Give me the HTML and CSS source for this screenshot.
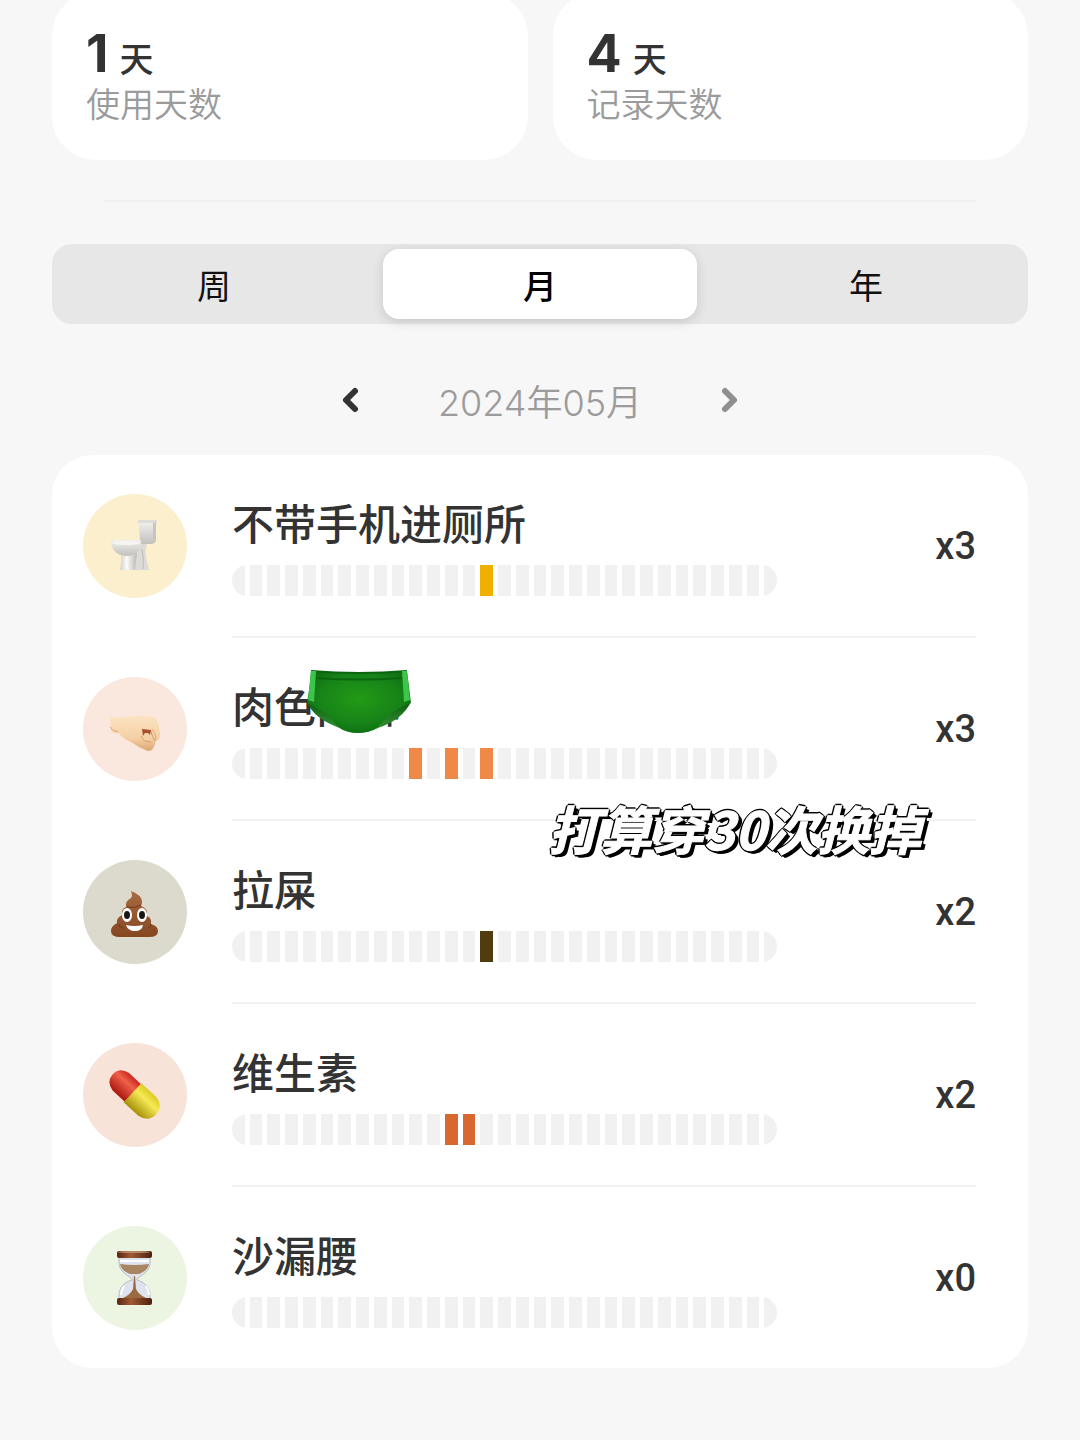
FILE: index.html
```html
<!DOCTYPE html>
<html lang="zh-CN">
<head>
<meta charset="utf-8">
<meta name="viewport" content="width=device-width, initial-scale=1">
<title>统计</title>
<link rel="stylesheet" href="styles.css">
</head>
<body>
<main class="page">
  <section class="stats">
    <div class="stat"><p class="stat-value"><strong>1</strong> 天</p><p class="stat-label">使用天数</p></div>
    <div class="stat"><p class="stat-value"><strong>4</strong> 天</p><p class="stat-label">记录天数</p></div>
  </section>
  <hr class="rule">
  <div class="segments">
    <button class="segment" type="button">周</button>
    <button class="segment segment-on" type="button" aria-pressed="true">月</button>
    <button class="segment" type="button">年</button>
  </div>
  <nav class="period">
    <button class="arrow" type="button" aria-label="上个月"><svg width="20" height="28" viewBox="0 0 20 28"><path d="M15 5 6 14l9 9"/></svg></button>
    <span class="period-name">2024年05月</span>
    <button class="arrow arrow-next" type="button" aria-label="下个月"><svg width="20" height="28" viewBox="0 0 20 28"><path d="M5 5l9 9-9 9"/></svg></button>
  </nav>
  <ul class="habits">
    <li class="habit">
      <span class="badge badge-yellow">
        <svg width="56" height="56" viewBox="0 0 56 56">
          <defs>
            <linearGradient id="china" x1="0" y1="0" x2="0" y2="1"><stop offset="0" stop-color="#f1f0ee"/><stop offset="1" stop-color="#c2c0bd"/></linearGradient>
            <linearGradient id="foot" x1="0" y1="0" x2="1" y2="0"><stop offset="0" stop-color="#d0cecb"/><stop offset=".4" stop-color="#fbfbfa"/><stop offset="1" stop-color="#bab7b3"/></linearGradient>
          </defs>
          <path d="M29 26h11c-3 9 0 17 2 26H27z" fill="#dddbd8"/>
          <path d="M14 35h16l-2 17H13q2-8 1-17z" fill="url(#foot)"/>
          <path d="M32 4h17v18q-1 4-5 4H33z" fill="url(#china)"/>
          <path d="M31 2h19v3H31z" fill="#dedcd8"/>
          <path d="M46 5h3v18l-3 2z" fill="#c8c5c1"/>
          <path d="M4 25q0-3 4-3h24q3 0 2 4-2 12-15 12Q6 37 4 25z" fill="url(#china)"/>
          <ellipse cx="19" cy="25" rx="14" ry="2" fill="#f6f5f3"/>
          <path d="M35 31q2 9 1 20" fill="none" stroke="#bcb9b5"/>
        </svg>
      </span>
      <div class="habit-body">
        <div class="habit-main"><h2 class="habit-name">不带手机进厕所</h2><div class="days gold"><i></i><i></i><i></i><i></i><i></i><i></i><i></i><i></i><i></i><i></i><i></i><i></i><i></i><i></i><i class="on"></i><i></i><i></i><i></i><i></i><i></i><i></i><i></i><i></i><i></i><i></i><i></i><i></i><i></i><i></i><i></i><i></i></div></div>
        <span class="count">x3</span>
      </div>
    </li>
    <li class="habit">
      <span class="badge badge-peach">
        <svg width="56" height="56" viewBox="0 0 56 56">
          <defs><linearGradient id="skin" x1="0" y1="0" x2="0" y2="1"><stop offset="0" stop-color="#fce3c2"/><stop offset=".65" stop-color="#f5cfa4"/><stop offset="1" stop-color="#dca371"/></linearGradient></defs>
          <path d="M3 16q9 1 17 0 10-2 19-1 9 0 11 4 2 5 3 14 1 5-4 7-2 10-8 10-9-3-17-9Q14 37 12 32q-5 1-8-2z" fill="url(#skin)"/>
          <path d="M35 29l9 1q1 6 4 10M34 35q2 6 10 6" fill="none" stroke="#d29a6b"/>
          <path d="M35 28l9 1-1 5-2-2h-3l-2 3z" fill="#a9512c"/>
          <path d="M45 28q4 4 4 11M3 26q2 4 8 5" fill="none" stroke="#d9a77a"/>
        </svg>
      </span>
      <div class="habit-body">
        <div class="habit-main"><h2 class="habit-name">肉色内裤
          <svg class="briefs" width="106" height="66" viewBox="0 0 106 66" aria-hidden="true">
            <defs>
              <radialGradient id="cloth" cx=".5" cy=".45" r=".6"><stop offset="0" stop-color="#229b16"/><stop offset=".65" stop-color="#168318"/><stop offset="1" stop-color="#0d6c11"/></radialGradient>
              <linearGradient id="lining" x1="0" y1="0" x2="0" y2="1"><stop offset="0" stop-color="#0c5d0f"/><stop offset="1" stop-color="#3b9a38"/></linearGradient>
            </defs>
            <path d="M1 33Q8 50 34 59q19 9 38 0 24-8 33-26z" fill="url(#lining)"/>
            <path d="M5 2q48 4 96 0l4 32Q86 40 71 59q-8 5-19 5-12 0-20-6Q19 41 1 34 4 18 5 2z" fill="url(#cloth)"/>
            <path d="M5 2q48 4 96 0M10 9q43 3 86 0" fill="none" stroke="#0c650e" stroke-width="2"/>
            <path d="M5 2h5L8 33l-6-2zM96 2h5l3 29-6 2z" fill="#3cc44b"/>
          </svg></h2><div class="days orange"><i></i><i></i><i></i><i></i><i></i><i></i><i></i><i></i><i></i><i></i><i class="on"></i><i></i><i class="on"></i><i></i><i class="on"></i><i></i><i></i><i></i><i></i><i></i><i></i><i></i><i></i><i></i><i></i><i></i><i></i><i></i><i></i><i></i><i></i></div></div>
        <span class="count">x3</span>
        <p class="note">打算穿30次换掉</p>
      </div>
    </li>
    <li class="habit">
      <span class="badge badge-olive">
        <svg width="56" height="56" viewBox="0 0 56 56">
          <defs><linearGradient id="brown" x1="0" y1="0" x2="0" y2="1"><stop offset="0" stop-color="#a96b43"/><stop offset="1" stop-color="#85471f"/></linearGradient></defs>
          <path d="M24 7q11 4 11 11 0 2-1 4 7 2 6 10 5 2 4 8 7 2 7 7 0 6-9 6H13q-9 0-9-6 0-5 6-8-1-5 5-8-1-6 4-8-1-6 5-9 2-2 0-7z" fill="url(#brown)"/>
          <path d="M20 23q8 2 14-2M12 40q-1 3 4 4M44 40q0 3-3 4" fill="none" stroke="#6f391a"/>
          <ellipse cx="20" cy="31" rx="5" ry="7" fill="#fff"/><ellipse cx="35" cy="31" rx="5" ry="7" fill="#fff"/>
          <ellipse cx="20" cy="31" rx="3" ry="4" fill="#191716"/><ellipse cx="35" cy="31" rx="3" ry="4" fill="#191716"/>
          <path d="M19 41q8 2 17 0-1 6-8 6t-9-6z" fill="#fff"/>
        </svg>
      </span>
      <div class="habit-body">
        <div class="habit-main"><h2 class="habit-name">拉屎</h2><div class="days umber"><i></i><i></i><i></i><i></i><i></i><i></i><i></i><i></i><i></i><i></i><i></i><i></i><i></i><i></i><i class="on"></i><i></i><i></i><i></i><i></i><i></i><i></i><i></i><i></i><i></i><i></i><i></i><i></i><i></i><i></i><i></i><i></i></div></div>
        <span class="count">x2</span>
      </div>
    </li>
    <li class="habit">
      <span class="badge badge-rose">
        <svg width="56" height="56" viewBox="0 0 56 56">
          <defs>
            <linearGradient id="red" x1="0" y1="0" x2="0" y2="1"><stop offset="0" stop-color="#c9261d"/><stop offset=".35" stop-color="#f0604b"/><stop offset="1" stop-color="#a9160f"/></linearGradient>
            <linearGradient id="yellow" x1="0" y1="0" x2="0" y2="1"><stop offset="0" stop-color="#dccb22"/><stop offset=".35" stop-color="#f6ea55"/><stop offset="1" stop-color="#a68f08"/></linearGradient>
          </defs>
          <g transform="rotate(43 27 27)">
            <path d="M27 15H9Q-2 17-2 27t11 12h18z" fill="url(#red)"/>
            <path d="M25 14h20q12 2 12 13T45 40H25z" fill="url(#yellow)"/>
          </g>
        </svg>
      </span>
      <div class="habit-body">
        <div class="habit-main"><h2 class="habit-name">维生素</h2><div class="days rust"><i></i><i></i><i></i><i></i><i></i><i></i><i></i><i></i><i></i><i></i><i></i><i></i><i class="on"></i><i class="on"></i><i></i><i></i><i></i><i></i><i></i><i></i><i></i><i></i><i></i><i></i><i></i><i></i><i></i><i></i><i></i><i></i><i></i></div></div>
        <span class="count">x2</span>
      </div>
    </li>
    <li class="habit">
      <span class="badge badge-green">
        <svg width="56" height="56" viewBox="0 0 56 56">
          <defs><linearGradient id="wood" x1="0" y1="0" x2="1" y2="0"><stop offset="0" stop-color="#57250f"/><stop offset=".4" stop-color="#a05a34"/><stop offset="1" stop-color="#4c200e"/></linearGradient></defs>
          <path d="M12 7h31v6c0 8-7 11-13 16v1c7 2 13 7 13 15v4H12v-4c0-8 6-13 13-15v-1C19 24 12 21 12 13z" fill="#dfe3ed" stroke="#b9bdc6"/>
          <path d="M13 14q14 2 29 0c-1 6-6 8-10 10h-9c-4-2-9-4-10-10z" fill="#a98663"/>
          <path d="M27 26h1l1 13q3 6 10 9H16q7-3 10-9z" fill="#9a6b40"/>
          <path d="M17 36q-3 4-3 9M39 36q3 4 3 9M13 11h29" fill="none" stroke="#fff" stroke-width="2"/>
          <rect x="10" y="1" width="35" height="7" rx="2" fill="url(#wood)"/><ellipse cx="27" cy="2" rx="16" ry="1" fill="#b58a6a"/>
          <rect x="10" y="48" width="35" height="7" rx="2" fill="url(#wood)"/>
        </svg>
      </span>
      <div class="habit-body">
        <div class="habit-main"><h2 class="habit-name">沙漏腰</h2><div class="days"><i></i><i></i><i></i><i></i><i></i><i></i><i></i><i></i><i></i><i></i><i></i><i></i><i></i><i></i><i></i><i></i><i></i><i></i><i></i><i></i><i></i><i></i><i></i><i></i><i></i><i></i><i></i><i></i><i></i><i></i><i></i></div></div>
        <span class="count">x0</span>
      </div>
    </li>
  </ul>
</main>
</body>
</html>
```
FILE: styles.css
```css
* { box-sizing: border-box; }

body {
  margin: 0;
  background: #f7f7f7;
  color: #333;
  font-family: Inter, "Noto Sans CJK SC", sans-serif;
}

p, h2, ul { margin: 0; padding: 0; }
button { border: 0; padding: 0; background: none; font: inherit; color: inherit; }

.page { padding: 0 52px 72px; }

.stats { display: grid; grid-template-columns: 1fr 1fr; gap: 25px; margin-top: -8px; }
.stat { padding: 35px 34px 37px; border-radius: 44px; background: #fff; }
.stat-value { font-size: 34px; font-weight: 500; line-height: 54px; }
.stat-value strong { margin-right: 2px; font-size: 52px; font-weight: 700; }
.stat-label { color: #9b9b9b; font-size: 34px; font-weight: 350; line-height: 36px; }

.rule { height: 2px; margin: 40px 52px 42px; border: 0; background: #f0f0f0; }

.segments {
  display: grid;
  grid-template-columns: repeat(3, 1fr);
  gap: 12px;
  padding: 5px;
  border-radius: 20px;
  background: #e7e7e7;
}
.segment { height: 70px; border-radius: 16px; color: #111; font-size: 34px; font-weight: 400; }
.segment-on { background: #fff; color: #000; font-weight: 500; box-shadow: 0 3px 12px rgba(0, 0, 0, .14); }

.period {
  display: flex;
  align-items: center;
  justify-content: center;
  gap: 78px;
  height: 131px;
  padding-top: 20px;
}
.period-name { color: #9b9b9b; font-size: 36px; font-weight: 350; }
.arrow { display: flex; color: #333; }
.arrow path { fill: none; stroke: currentColor; stroke-width: 6; stroke-linecap: round; stroke-linejoin: round; }
.arrow-next { color: #8f8f8f; }

.habits { border-radius: 40px; background: #fff; list-style: none; }
.habit { display: flex; gap: 45px; padding: 0 52px 0 31px; }
.badge {
  display: flex;
  flex: none;
  align-items: center;
  justify-content: center;
  width: 104px;
  height: 104px;
  margin-top: 39px;
  border-radius: 50%;
}
.badge-yellow { background: #fbefcd; }
.badge-peach { background: #fae7dd; }
.badge-olive { background: #dcdacd; }
.badge-rose { background: #f7e3d8; }
.badge-green { background: #ebf5e2; }

.habit-body {
  position: relative;
  display: flex;
  flex: 1;
  align-items: center;
  height: 183px;
  border-bottom: 2px solid #f1f1f1;
}
.habit:last-child .habit-body { height: 181px; border-bottom: 0; }
.habit-main { flex: 1; }
.habit-name { position: relative; font-size: 42px; font-weight: 500; line-height: 60px; }
.briefs { position: absolute; left: 74px; top: -9px; }
.days {
  display: grid;
  grid-template-columns: repeat(31, 1fr);
  gap: 5px;
  height: 31px;
  margin-top: 10px;
  overflow: hidden;
  border-radius: 16px;
}
.days i { background: #f1f1f1; }
.gold .on { background: #f0b000; }
.orange .on { background: #f08848; }
.umber .on { background: #513c10; }
.rust .on { background: #d96830; }
.count { flex: 0 0 199px; font-family: Roboto, sans-serif; font-size: 38px; font-weight: 500; text-align: right; }

.note {
  position: absolute;
  top: 155px;
  left: 316px;
  z-index: 1;
  color: #fff;
  font-family: "Noto Sans CJK SC", sans-serif;
  font-size: 52px;
  font-style: italic;
  font-weight: 700;
  line-height: 70px;
  white-space: nowrap;
  -webkit-text-stroke: 1px #fff;
  text-shadow: -2px 0 #000, 0 -2px #000, -1px -1px #000, 1px -1px #000, -1px 1px #000, 2px 0 #000, 0 2px #000, 2px 2px #000, 3px 3px #000, 4px 3px #000;
}
```
